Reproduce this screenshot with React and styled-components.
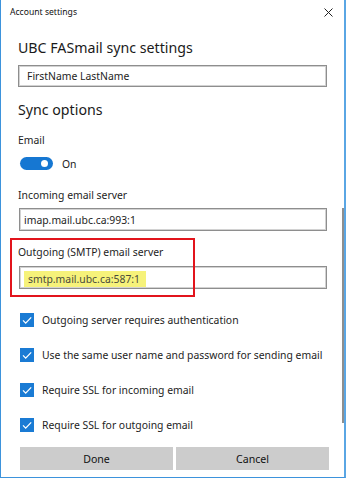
import React from "react";
import styled, { createGlobalStyle } from "styled-components";

const Global = createGlobalStyle`
  html, body { margin: 0; padding: 0; background: #ffffff; }
  body { font-family: "Noto Sans", "Open Sans", sans-serif; color: #1b1b1b; }
`;

const Window = styled.div`
  position: relative;
  box-sizing: border-box;
  width: 346px;
  height: 478px;
  background: #ffffff;
  border-left: 1px solid #3d93dc;
  border-right: 2px solid #5aa6e4;
  border-bottom: 1px solid #3d93dc;
  overflow: hidden;
`;

const TitleBar = styled.div`
  height: 24px;
  display: flex;
  align-items: center;
  justify-content: space-between;
  padding: 0 11px 0 9px;
`;

const Title = styled.span`
  font-size: 8.6px;
  color: #111;
`;

const CloseIcon = styled.svg`
  width: 9px;
  height: 9px;
  display: block;
`;

const Content = styled.div`
  display: flex;
  flex-direction: column;
  padding: 0 17px 0 17px;
`;

const Heading = styled.div`
  font-size: 14.2px;
  line-height: 20px;
  height: 20px;
  color: #1a1a1a;
  margin-top: ${(p) => p.$mt}px;
`;

const Label = styled.div`
  font-size: 10.4px;
  line-height: 14px;
  height: 14px;
  color: #1d1d1d;
  margin-top: ${(p) => p.$mt}px;
`;

const TextBox = styled.div`
  box-sizing: border-box;
  display: flex;
  align-items: center;
  height: ${(p) => p.$h}px;
  margin-top: ${(p) => p.$mt}px;
  margin-left: ${(p) => p.$ml || 0}px;
  border: 1px solid #8e8e8e;
  box-shadow: inset 0 0 0 1px #d2d2d2;
  padding-left: ${(p) => p.$pl || 8}px;
  font-size: 10.4px;
  color: #1d1d1d;
`;

const Highlight = styled.span`
  background: #f6f27a;
  padding: 1px 6px 1px 4px;
  margin-top: 3px;
  line-height: 14px;
  color: #4a4a3a;
`;

const ToggleRow = styled.div`
  display: flex;
  align-items: center;
  gap: 9px;
  margin-top: 10px;
  margin-left: 2px;
  height: 13px;
`;

const Toggle = styled.div`
  position: relative;
  width: 33px;
  height: 13px;
  border-radius: 7px;
  background: #1677d2;
  &::after {
    content: "";
    position: absolute;
    top: 3px;
    right: 5px;
    width: 7px;
    height: 7px;
    border-radius: 50%;
    background: #ffffff;
  }
`;

const ToggleText = styled.span`
  font-size: 10.4px;
  line-height: 14px;
`;

const CheckList = styled.div`
  display: flex;
  flex-direction: column;
  gap: 21px;
  margin-top: 24px;
  margin-left: 2px;
`;

const CheckRow = styled.div`
  display: flex;
  align-items: center;
  gap: 8px;
  height: 14px;
  font-size: 10.4px;
  color: #1d1d1d;
  white-space: nowrap;
`;

const Box = styled.span`
  width: 14px;
  height: 14px;
  flex: none;
  background: #1a7bd4;
  display: flex;
  align-items: center;
  justify-content: center;
`;

const Buttons = styled.div`
  display: grid;
  grid-template-columns: 1fr 1fr;
  gap: 3px;
  margin-top: 15px;
  margin-left: 2px;
  width: 309px;
`;

const Button = styled.div`
  height: 23px;
  background: #cccccc;
  display: flex;
  align-items: center;
  justify-content: center;
  font-size: 10.6px;
  color: #111;
`;

const RedBox = styled.div`
  position: absolute;
  left: 9px;
  top: 238px;
  width: 185px;
  height: 59px;
  box-sizing: border-box;
  border: 2px solid #e2141c;
`;

const ScrollThumb = styled.div`
  position: absolute;
  left: 341px;
  top: 208px;
  width: 2px;
  height: 215px;
  background: #8f8f8f;
`;

const Check = () => (
  <Box>
    <svg width="14" height="14" viewBox="0 0 14 14">
      <polyline points="3,7.4 5.7,10.1 11.2,4.4" fill="none" stroke="#fff" strokeWidth="1.3" />
    </svg>
  </Box>
);

export default function App() {
  return (
    <>
      <Global />
      <Window>
        <TitleBar>
          <Title>Account settings</Title>
          <CloseIcon viewBox="0 0 9 9">
            <path d="M0.5 0.5 L8.5 8.5 M8.5 0.5 L0.5 8.5" stroke="#222" strokeWidth="1" />
          </CloseIcon>
        </TitleBar>
        <Content>
          <Heading $mt={14}>UBC FASmail sync settings</Heading>
          <TextBox $h={22} $mt={7}>FirstName LastName</TextBox>
          <Heading $mt={13}>Sync options</Heading>
          <Label $mt={13}>Email</Label>
          <ToggleRow>
            <Toggle />
            <ToggleText>On</ToggleText>
          </ToggleRow>
          <Label $mt={18}>Incoming email server</Label>
          <TextBox $h={23} $mt={6} $ml={1} $pl={4}>imap.mail.ubc.ca:993:1</TextBox>
          <Label $mt={14}>Outgoing (SMTP) email server</Label>
          <TextBox $h={23} $mt={7} $ml={1} $pl={4}>
            <Highlight>smtp.mail.ubc.ca:587:1</Highlight>
          </TextBox>
          <CheckList>
            <CheckRow><Check />Outgoing server requires authentication</CheckRow>
            <CheckRow><Check />Use the same user name and password for sending email</CheckRow>
            <CheckRow><Check />Require SSL for incoming email</CheckRow>
            <CheckRow><Check />Require SSL for outgoing email</CheckRow>
          </CheckList>
          <Buttons>
            <Button>Done</Button>
            <Button>Cancel</Button>
          </Buttons>
        </Content>
        <RedBox />
        <ScrollThumb />
      </Window>
    </>
  );
}
